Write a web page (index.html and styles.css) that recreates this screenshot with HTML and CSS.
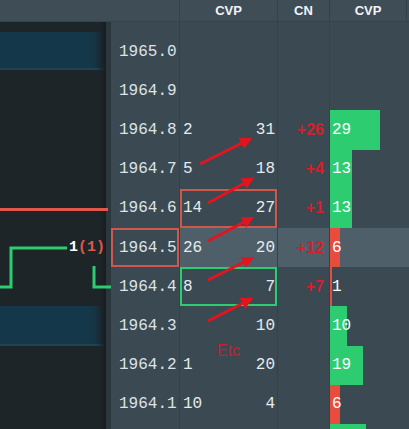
FILE: index.html
```html
<!DOCTYPE html>
<html lang="en">
<head>
    <meta charset="UTF-8">
    <meta name="viewport" content="width=device-width, initial-scale=1.0">
    <title>Ladder</title>
    <link rel="stylesheet" href="styles.css">
</head>
<body>
    <div class="screen">
        <div class="head">
            <div class="head-blank"></div>
            <div class="head-cell w-cvp">CVP</div>
            <div class="head-cell w-cn">CN</div>
            <div class="head-cell w-bar">CVP</div>
        </div>
        <div class="body">
            <div class="chart">
                <svg class="chart-svg" width="111" height="407" viewBox="0 0 111 407">
                    <defs>
                        <linearGradient id="band" x1="0" x2="1" y1="0" y2="0">
                            <stop offset="0.85" stop-color="#143849"/>
                            <stop offset="1" stop-color="#1b2a31"/>
                        </linearGradient>
                        <linearGradient id="edge" x1="0" x2="1" y1="0" y2="0">
                            <stop offset="0" stop-color="#1e2528" stop-opacity="0"/>
                            <stop offset="1" stop-color="#171c1f"/>
                        </linearGradient>
                    </defs>
                    <rect x="0" y="10" width="106" height="36" fill="url(#band)"/>
                    <rect x="0" y="46" width="106" height="2" fill="#1d4355"/>
                    <rect x="0" y="284" width="106" height="38" fill="url(#band)"/>
                    <rect x="0" y="322" width="106" height="2" fill="#1d4355"/>
                    <rect x="96" y="0" width="10" height="407" fill="url(#edge)"/>
                    <rect x="106" y="0" width="5" height="407" fill="#2b373d"/>
                    <line x1="0" y1="187.5" x2="108" y2="187.5" stroke="#e0584c" stroke-width="3"/>
                    <path d="M0 265 H11 V226 H67" fill="none" stroke="#2ecc71" stroke-width="3"/>
                    <path d="M94 244 V265 H111" fill="none" stroke="#2ecc71" stroke-width="3"/>
                </svg>
                <span class="chart-label">1<span class="red">(1)</span></span>
            </div>
            <div class="ladder">
                <div class="row row-top">
                    <div class="price"></div><div class="cvp"></div><div class="cn"></div><div class="bar-cell"></div>
                </div>
                <div class="row">
                    <div class="price">1965.0</div><div class="cvp"></div><div class="cn"></div><div class="bar-cell"></div>
                </div>
                <div class="row">
                    <div class="price">1964.9</div><div class="cvp"></div><div class="cn"></div><div class="bar-cell"></div>
                </div>
                <div class="row">
                    <div class="price">1964.8</div>
                    <div class="cvp"><span>2</span><span>31</span></div>
                    <div class="cn">+26</div>
                    <div class="bar-cell"><div class="bar green" style="width: 50px"></div><span class="bar-num">29</span></div>
                </div>
                <div class="row">
                    <div class="price">1964.7</div>
                    <div class="cvp"><span>5</span><span>18</span></div>
                    <div class="cn">+4</div>
                    <div class="bar-cell"><div class="bar green" style="width: 22px"></div><span class="bar-num">13</span></div>
                </div>
                <div class="row">
                    <div class="price">1964.6</div>
                    <div class="cvp box-red"><span>14</span><span>27</span></div>
                    <div class="cn">+1</div>
                    <div class="bar-cell"><div class="bar green" style="width: 22px"></div><span class="bar-num">13</span></div>
                </div>
                <div class="row row-current">
                    <div class="price box-red">1964.5</div>
                    <div class="cvp"><span>26</span><span>20</span></div>
                    <div class="cn">+12</div>
                    <div class="bar-cell"><div class="bar red" style="width: 10px"></div><span class="bar-num">6</span></div>
                </div>
                <div class="row">
                    <div class="price">1964.4</div>
                    <div class="cvp box-green"><span>8</span><span>7</span></div>
                    <div class="cn">+7</div>
                    <div class="bar-cell"><div class="bar red" style="width: 2px"></div><span class="bar-num">1</span></div>
                </div>
                <div class="row">
                    <div class="price">1964.3</div>
                    <div class="cvp"><span></span><span>10</span></div>
                    <div class="cn"></div>
                    <div class="bar-cell"><div class="bar green" style="width: 17px"></div><span class="bar-num">10</span></div>
                </div>
                <div class="row">
                    <div class="price">1964.2</div>
                    <div class="cvp"><span>1</span><span>20</span></div>
                    <div class="cn"></div>
                    <div class="bar-cell"><div class="bar green" style="width: 33px"></div><span class="bar-num">19</span></div>
                </div>
                <div class="row">
                    <div class="price">1964.1</div>
                    <div class="cvp"><span>10</span><span>4</span></div>
                    <div class="cn"></div>
                    <div class="bar-cell"><div class="bar red" style="width: 10px"></div><span class="bar-num">6</span></div>
                </div>
                <div class="row">
                    <div class="price"></div><div class="cvp"></div><div class="cn"></div>
                    <div class="bar-cell"><div class="bar green" style="width: 36px"></div></div>
                </div>
            </div>
        </div>

        <!-- annotations drawn over the ladder -->
        <svg class="notes" width="409" height="429" viewBox="0 0 409 429">
            <defs>
                <marker id="head" viewBox="0 0 10 10" refX="8" refY="5" markerWidth="4.5" markerHeight="4" orient="auto">
                    <path d="M0 0 L10 5 L0 10 Z" fill="#e3141d"/>
                </marker>
            </defs>
            <g stroke="#e3141d" stroke-width="3" marker-end="url(#head)">
                <line x1="200" y1="164" x2="250" y2="139"/>
                <line x1="208" y1="203" x2="252" y2="179"/>
                <line x1="208" y1="241" x2="252" y2="218"/>
                <line x1="208" y1="280" x2="252" y2="258"/>
                <line x1="208" y1="321" x2="251" y2="299"/>
            </g>
        </svg>
        <span class="etc">Etc</span>
    </div>
</body>
</html>
```

FILE: styles.css
```css
body {
    margin: 0;
    padding: 0;
    background: #3b4953;
    font-family: "Liberation Mono", monospace;
    overflow: hidden;
}
.screen {
    position: relative;
    width: 409px;
    height: 429px;
    overflow: hidden;
    background: #3b4953;
}
.head {
    display: flex;
    height: 22px;
    background: #3f4d57;
    border-bottom: 1px solid #36434c;
    box-sizing: border-box;
}
.head-blank {
    width: 179px;
}
.head-cell {
    display: flex;
    align-items: center;
    justify-content: center;
    border-left: 1px solid #35424b;
    color: #f2f5f7;
    font-family: "Liberation Sans", Arial, sans-serif;
    font-weight: bold;
    font-size: 13px;
    box-sizing: border-box;
}
.w-cvp { width: 98px; }
.w-cn { width: 52px; }
.w-bar { width: 78px; border-right: 1px solid #35424b; }
.body {
    display: flex;
    height: 407px;
}
.chart {
    position: relative;
    width: 111px;
    flex-shrink: 0;
    background: #1e2528;
}
.chart-svg {
    display: block;
}
.chart-label {
    position: absolute;
    left: 69px;
    top: 217px;
    color: #ffffff;
    font-weight: bold;
    font-size: 15px;
    line-height: 18px;
}
.chart-label .red {
    color: #e0584c;
}
.ladder {
    flex: 1;
    display: flex;
    flex-direction: column;
}
.row {
    display: grid;
    grid-template-columns: 68px 98px 52px 1fr;
    height: 39.2px;
    flex-shrink: 0;
    color: #e6ebee;
    font-size: 16px;
}
.row-top {
    height: 10px;
}
.row > div {
    display: flex;
    align-items: center;
    box-sizing: border-box;
}
.price {
    padding-left: 8px;
    color: #dde3e7;
}
.cvp {
    justify-content: space-between;
    padding: 0 2px 0 3px;
    border-left: 1px solid #35424b;
}
.cn {
    justify-content: flex-end;
    padding-right: 5px;
    border-left: 1px solid #35424b;
    color: #d41f2b;
    font-family: "Liberation Sans", Arial, sans-serif;
    font-weight: bold;
    font-size: 16px;
}
.bar-cell {
    position: relative;
    border-left: 1px solid #35424b;
}
.bar {
    position: absolute;
    left: 0;
    top: 0;
    bottom: 0;
}
.bar.green { background: #2ecc71; }
.bar.red { background: #e74c3c; }
.bar-num {
    position: relative;
    padding-left: 2px;
    color: #ffffff;
}
.row-current .cvp,
.row-current .cn,
.row-current .bar-cell {
    background: #4f5f6a;
}
.box-red {
    box-shadow: inset 0 0 0 2px #d0574b;
}
.box-green {
    box-shadow: inset 0 0 0 2px #2ecc71;
}
.notes {
    position: absolute;
    left: 0;
    top: 0;
    pointer-events: none;
}
.etc {
    position: absolute;
    left: 217px;
    top: 342px;
    color: #c8202b;
    font-family: "Liberation Sans", Arial, sans-serif;
    font-size: 16px;
}
```
